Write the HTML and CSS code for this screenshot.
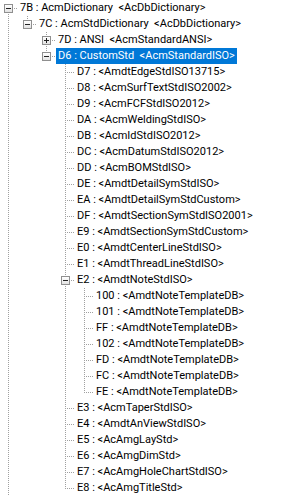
FILE: index.html
```html
<!DOCTYPE html>
<html lang="en">

<head>
    <meta charset="UTF-8">
    <meta name="viewport" content="width=device-width, initial-scale=1.0">
    <title>Standards Tree</title>
    <link rel="stylesheet" href="styles.css">
</head>

<body>
    <div class="tree" id="tree"></div>

    <script>
        // Tree data: "more" means the node has siblings below the visible area
        const noteTemplates = ['100', '101', 'FF', '102', 'FD', 'FC', 'FE'].map(id => ({
            label: `${id} : <AmdtNoteTemplateDB>`
        }));

        const isoStandards = [
            { label: 'D7 : <AmdtEdgeStdISO13715>' },
            { label: 'D8 : <AcmSurfTextStdISO2002>' },
            { label: 'D9 : <AcmFCFStdISO2012>' },
            { label: 'DA : <AcmWeldingStdISO>' },
            { label: 'DB : <AcmIdStdISO2012>' },
            { label: 'DC : <AcmDatumStdISO2012>' },
            { label: 'DD : <AcmBOMStdISO>' },
            { label: 'DE : <AmdtDetailSymStdISO>' },
            { label: 'EA : <AmdtDetailSymStdCustom>' },
            { label: 'DF : <AmdtSectionSymStdISO2001>' },
            { label: 'E9 : <AmdtSectionSymStdCustom>' },
            { label: 'E0 : <AmdtCenterLineStdISO>' },
            { label: 'E1 : <AmdtThreadLineStdISO>' },
            { label: 'E2 : <AmdtNoteStdISO>', open: true, children: noteTemplates },
            { label: 'E3 : <AcmTaperStdISO>' },
            { label: 'E4 : <AmdtAnViewStdISO>' },
            { label: 'E5 : <AcAmgLayStd>' },
            { label: 'E6 : <AcAmgDimStd>' },
            { label: 'E7 : <AcAmgHoleChartStdISO>' },
            { label: 'E8 : <AcAmgTitleStd>' }
        ];

        const tree = [
            {
                label: '7B : AcmDictionary  <AcDbDictionary>', open: true, more: true, children: [
                    {
                        label: '7C : AcmStdDictionary  <AcDbDictionary>', open: true, children: [
                            { label: '7D : ANSI  <AcmStandardANSI>', children: [{}] },
                            { label: 'D6 : CustomStd  <AcmStandardISO>', open: true, selected: true, children: isoStandards }
                        ]
                    }
                ]
            }
        ];

        const treeContainer = document.getElementById('tree');

        // Build one row per visible node, with a guide cell for every level
        function renderNodes(nodes, guides) {
            nodes.forEach((node, index) => {
                const isLast = index === nodes.length - 1 && !node.more;
                const isFirstRoot = guides.length === 0 && index === 0;

                const row = document.createElement('div');
                row.className = 'tree-row';

                guides.forEach(hasLine => {
                    const cell = document.createElement('span');
                    cell.className = hasLine ? 'guide guide-line' : 'guide';
                    row.appendChild(cell);
                });

                const branch = document.createElement('span');
                if (isFirstRoot) {
                    branch.className = 'guide guide-start';
                } else {
                    branch.className = isLast ? 'guide guide-end' : 'guide guide-tee';
                }

                if (node.children) {
                    const toggle = document.createElement('span');
                    toggle.className = node.open ? 'toggle toggle-open' : 'toggle';
                    branch.appendChild(toggle);
                }
                row.appendChild(branch);

                const label = document.createElement('span');
                label.className = node.selected ? 'tree-label selected' : 'tree-label';
                label.textContent = node.label;
                row.appendChild(label);

                treeContainer.appendChild(row);

                if (node.open) {
                    renderNodes(node.children, [...guides, !isLast]);
                }
            });
        }

        renderNodes(tree, []);
    </script>
</body>

</html>
```

FILE: styles.css
```css
:root {
    --dots-v: repeating-linear-gradient(to bottom, #a0a0a0 0 1px, transparent 1px 2px);
    --dots-h: repeating-linear-gradient(to right, #a0a0a0 0 1px, transparent 1px 2px);
}

body {
    margin: 0;
    background: #fff;
    overflow: hidden;
}

.tree {
    font-family: Roboto, "Liberation Sans", sans-serif;
    font-size: 11px;
    color: #000;
}

.tree-row {
    display: flex;
    height: 16px;
}

.guide {
    flex: none;
    width: 19px;
    height: 16px;
    background-repeat: no-repeat;
}

/* ancestor still has siblings below */
.guide-line {
    background-image: var(--dots-v);
    background-position: 8px 0;
    background-size: 1px 16px;
}

/* node with siblings below */
.guide-tee {
    background-image: var(--dots-h), var(--dots-v);
    background-position: 8px 8px, 8px 0;
    background-size: 10px 1px, 1px 16px;
}

/* last node of its parent */
.guide-end {
    background-image: var(--dots-h), var(--dots-v);
    background-position: 8px 8px, 8px 0;
    background-size: 10px 1px, 1px 9px;
}

/* first node at the root */
.guide-start {
    background-image: var(--dots-h), var(--dots-v);
    background-position: 8px 8px, 8px 8px;
    background-size: 10px 1px, 1px 8px;
}

.toggle {
    display: block;
    box-sizing: border-box;
    width: 9px;
    height: 9px;
    margin: 4px 0 0 4px;
    border: 1px solid #8f8f8f;
    background:
        linear-gradient(#222, #222) center / 5px 1px no-repeat,
        linear-gradient(#222, #222) center / 1px 5px no-repeat,
        linear-gradient(#fff, #e2e2e2);
}

.toggle-open {
    background:
        linear-gradient(#222, #222) center / 5px 1px no-repeat,
        linear-gradient(#fff, #e2e2e2);
}

.tree-label {
    height: 16px;
    line-height: 16px;
    padding: 0 2px;
    margin-left: -1px;
    white-space: pre;
}

.selected {
    background: #0078d7;
    color: #fff;
}
```
